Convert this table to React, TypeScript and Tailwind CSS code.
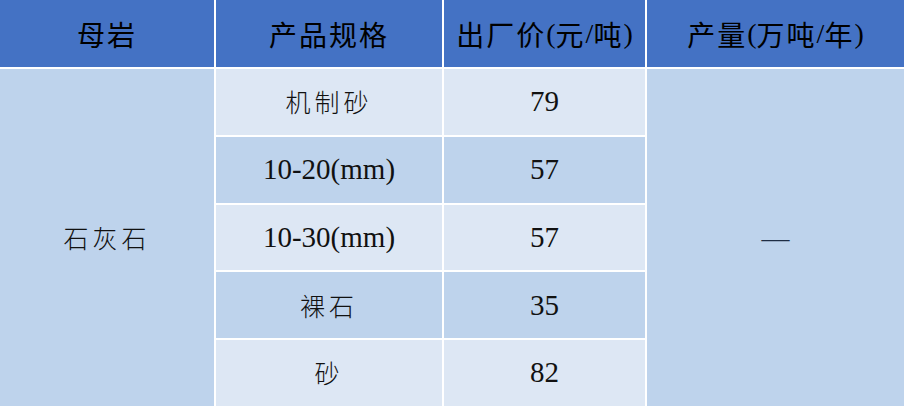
const headers = ['母岩', '产品规格', '出厂价(元/吨)', '产量(万吨/年)'];

const rows = [
  { spec: '机制砂', price: '79', cjk: true },
  { spec: '10-20(mm)', price: '57', cjk: false },
  { spec: '10-30(mm)', price: '57', cjk: false },
  { spec: '裸石', price: '35', cjk: true },
  { spec: '砂', price: '82', cjk: true },
];

const cjkFont = "font-['Noto_Sans_CJK_SC',sans-serif]";
const serifFont = "font-['Liberation_Serif','Noto_Sans_CJK_SC',serif]";

export default function App() {
  return (
    <div className="w-[904px] h-[406px] bg-white">
      <div className="grid h-full grid-cols-[214px_226px_201px_257px] grid-rows-[67px_repeat(5,1fr)] gap-[2px] bg-white">
        {headers.map((h) => (
          <div
            key={h}
            className="flex items-center justify-center bg-[#4472C4] text-[28px] font-normal text-black tracking-[2px] font-['Noto_Sans_CJK_SC','Liberation_Serif',sans-serif]"
          >
            {h.split(/([()/])/).map((part, i) =>
              /[()/]/.test(part) ? (
                <span key={i} className="font-['Liberation_Serif',serif] tracking-normal">
                  {part}
                </span>
              ) : (
                <span key={i}>{part}</span>
              )
            )}
          </div>
        ))}

        <div
          className={`row-span-5 col-start-1 row-start-2 flex items-center justify-center bg-[#BED3EC] text-[25px] font-light tracking-[4px] text-[#111] ${cjkFont}`}
        >
          石灰石
        </div>

        {rows.map((r, i) => {
          const bg = i % 2 === 0 ? 'bg-[#DDE7F4]' : 'bg-[#BED3EC]';
          return [
            <div
              key={`s${i}`}
              className={`col-start-2 flex items-center justify-center ${bg} text-[#111] ${
                r.cjk
                  ? `text-[25px] font-light tracking-[4px] ${cjkFont}`
                  : `text-[29px] ${serifFont}`
              }`}
              style={{ gridRowStart: i + 2 }}
            >
              {r.spec}
            </div>,
            <div
              key={`p${i}`}
              className={`col-start-3 flex items-center justify-center ${bg} text-[29px] text-[#111] ${serifFont}`}
              style={{ gridRowStart: i + 2 }}
            >
              {r.price}
            </div>,
          ];
        })}

        <div
          className={`row-span-5 col-start-4 row-start-2 flex items-center justify-center bg-[#BED3EC] text-[28px] text-[#1f2d44] ${serifFont}`}
        >
          —
        </div>
      </div>
    </div>
  );
}
